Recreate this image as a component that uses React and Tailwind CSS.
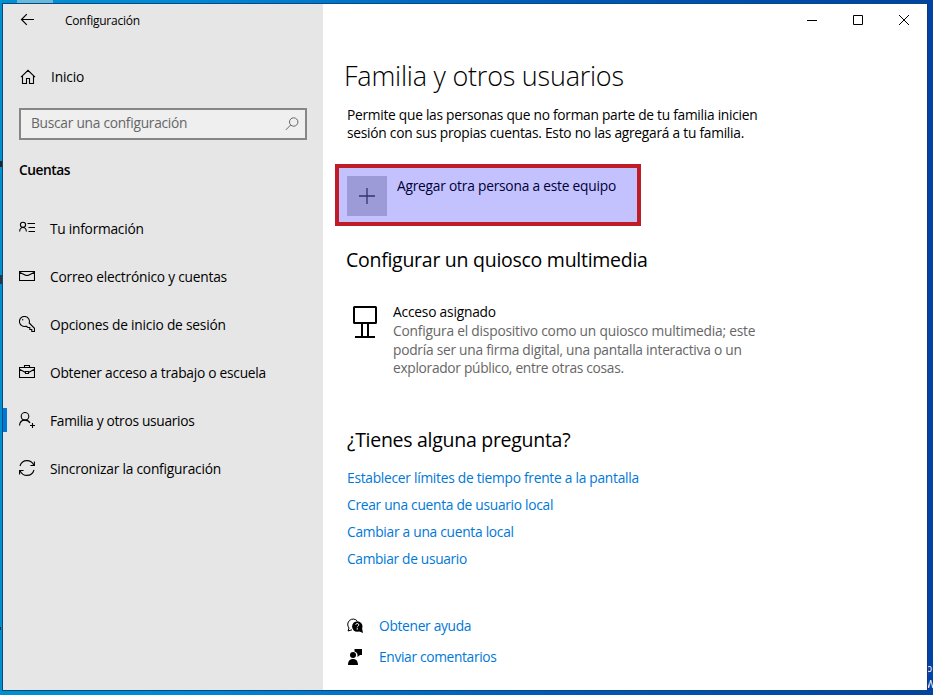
import React from "react";

function Icon({ children, className = "w-4 h-4", box = "0 0 16 16", sw = 1.1 }) {
  return (
    <svg viewBox={box} className={`${className} shrink-0`} fill="none" stroke="#000" strokeWidth={sw}>
      {children}
    </svg>
  );
}

const navItems = [
  {
    label: "Tu información",
    tracking: "tracking-[-0.25px]",
    icon: (
      <>
        <circle cx="4" cy="4.8" r="2.6" />
        <path d="M.6 11.5C.8 9 2.2 7.5 4 7.5S7.2 9 7.4 11.5M8.500 3.5H16M9.500 7.5H16M9.500 11.5H16" />
      </>
    ),
  },
  {
    label: "Correo electrónico y cuentas",
    tracking: "tracking-[-0.22px]",
    icon: <path d="M.5 3.5h15v9H.5zM.5 4.2 6 7q2 1 4 0l5.5-2.8" />,
  },
  {
    label: "Opciones de inicio de sesión",
    tracking: "tracking-[-0.2px]",
    icon: (
      <>
        <path d="M7 10.2A5 5 0 1 1 10.2 7l5.3 5.3v3.2h-2.7v-2h-2v-2H9z" />
        <circle cx="3.7" cy="3.7" r=".7" fill="#000" stroke="none" />
      </>
    ),
  },
  {
    label: "Obtener acceso a trabajo o escuela",
    tracking: "tracking-[-0.26px]",
    icon: <path d="M.5 3.5h15v10H.5zM5.5 3.5v-2h5v2M.5 5.2 6.5 8.5M9.5 8.5l6-3.3M6.5 7.5h3v2h-3z" />,
  },
  {
    label: "Familia y otros usuarios",
    tracking: "tracking-[-0.3px]",
    active: true,
    icon: (
      <>
        <circle cx="6" cy="4.3" r="3.8" />
        <path d="M.5 13.5C.8 10 3 8.1 6 8.1c2.2 0 4 1 5 3M13.5 11v5M11 13.5h5" />
      </>
    ),
  },
  {
    label: "Sincronizar la configuración",
    tracking: "tracking-[-0.22px]",
    icon: <path d="M1 6C2 2.7 4.8.6 8 .6c3 0 5.5 1.7 6.8 4.5M15.4 1.5v4h-4M15 10c-1 3.3-3.8 5.4-7 5.4-3 0-5.5-1.7-6.8-4.5M.6 14.5v-4h4" />,
  },
];

const links = [
  ["Establecer límites de tiempo frente a la pantalla", "tracking-[-0.26px]"],
  ["Crear una cuenta de usuario local", "tracking-[-0.28px]"],
  ["Cambiar a una cuenta local", "tracking-[-0.27px]"],
  ["Cambiar de usuario", "tracking-[-0.33px]"],
];

function Sidebar() {
  return (
    <aside className="w-80 h-full shrink-0 bg-[#e6e6e6] flex flex-col">
      <div className="h-8 flex items-center pl-[17px]">
        <Icon sw={1.2} className="w-4 h-4">
          <path d="M14 7.5H1.500M6.800 2.200 1.500 7.500l5.300 5.300" />
        </Icon>
        <span className="ml-[29px] pt-0.5 text-[12px] leading-4 tracking-[-0.25px]">Configuración</span>
      </div>
      <div className="mt-[25px] h-8 flex items-center pl-[17px]">
        <Icon>
          <path d="M1 8.200 8 1.300l7 6.900M2.500 7v7.500h4v-5h3v5h4V7" />
        </Icon>
        <span className="ml-[15px] tracking-[-0.15px]">Inicio</span>
      </div>
      <div className="mt-[15px] ml-4 w-72 h-8 shrink-0 border-2 border-[#868686] bg-[#efefef] flex items-center justify-between pl-[10px] pr-[6px] text-[#666]">
        <span className="pb-px tracking-[-0.27px]">Buscar una configuración</span>
        <svg viewBox="0 0 14 14" className="w-[14px] h-[14px]" fill="none" stroke="#666" strokeWidth="1">
          <circle cx="8.700" cy="5" r="4.200" />
          <path d="M5.700 8 .8 12.900" />
        </svg>
      </div>
      <div className="mt-[18px] ml-4 h-6 flex items-center font-semibold tracking-[-0.45px]">Cuentas</div>
      <nav className="mt-[23px] flex flex-col">
        {navItems.map((item) => (
          <a key={item.label} className="h-12 flex items-center">
            <span className={`w-1 h-6 shrink-0 -mt-0.5 ${item.active ? "bg-[#0078d7]" : ""}`} />
            <span className="ml-3 -mt-[3px] flex"><Icon>{item.icon}</Icon></span>
            <span className={`ml-[15px] whitespace-nowrap ${item.tracking}`}>{item.label}</span>
          </a>
        ))}
      </nav>
    </aside>
  );
}

function Main() {
  return (
    <main className="flex-1 h-full bg-white flex flex-col pl-6 whitespace-nowrap">
      <div className="h-8 flex items-center justify-end gap-9 pr-[18px]">
        <svg viewBox="0 0 10 10" className="w-[10px] h-[10px]" stroke="#000"><path d="M0 5.500h10" /></svg>
        <svg viewBox="0 0 10 10" className="w-[10px] h-[10px]" stroke="#000" fill="none"><path d="M.5.5h9v9h-9z" /></svg>
        <svg viewBox="0 0 10 10" className="w-[10px] h-[10px]" stroke="#000"><path d="M0 0l10 10M10 0 0 10" /></svg>
      </div>
      <h1 className="mt-5 h-10 -ml-[3px] text-[27px] leading-10 font-light tracking-[-0.23px]">Familia y otros usuarios</h1>
      <p className="mt-[10px] leading-[18px]">
        <span className="block tracking-[-0.27px]">Permite que las personas que no forman parte de tu familia inicien</span>
        <span className="block tracking-[-0.25px]">sesión con sus propias cuentas. Esto no las agregará a tu familia.</span>
      </p>
      <button className="mt-[22px] -ml-3 w-[306px] h-[62px] shrink-0 border-4 border-[#c01c28] bg-[#c3c2ff] flex items-start pt-2 pl-2 text-left text-[#000033]">
        <span className="w-10 h-10 bg-[#9c9bd8] flex items-center justify-center">
          <svg viewBox="0 0 16 16" className="w-4 h-4" stroke="#33336c" strokeWidth="1.300"><path d="M0 8h16M8 0v16" /></svg>
        </span>
        <span className="ml-[10px] leading-5 tracking-[-0.22px]">Agregar otra persona a este equipo</span>
      </button>
      <h2 className="mt-5 h-7 -ml-px text-[19.5px] leading-7 tracking-[-0.27px]">Configurar un quiosco multimedia</h2>
      <div className="mt-[29px] flex">
        <svg viewBox="0 0 24 32" className="w-6 h-8 ml-[6px] mt-[3px] shrink-0" fill="none" stroke="#000" strokeWidth="2">
          <rect x="1" y="1" width="22" height="16" rx=".5" />
          <path d="M9 17v14M15 17v14M2 31h20" />
        </svg>
        <div className="ml-4">
          <div className="h-[19px] leading-[18px] tracking-[-0.2px]">Acceso asignado</div>
          <p className="text-[#666] leading-[18.5px]">
            <span className="block tracking-[-0.2px]">Configura el dispositivo como un quiosco multimedia; este</span>
            <span className="block tracking-[-0.25px]">podría ser una firma digital, una pantalla interactiva o un</span>
            <span className="block tracking-[-0.3px]">explorador público, entre otras cosas.</span>
          </p>
        </div>
      </div>
      <h2 className="mt-[48px] h-7 text-[19.5px] leading-7 tracking-[-0.28px]">¿Tienes alguna pregunta?</h2>
      <div className="mt-[10px] flex flex-col text-[#0078d7]">
        {links.map(([label, tracking]) => (
          <a key={label} className={`h-[27px] leading-[27px] ${tracking}`}>{label}</a>
        ))}
      </div>
      <div className="mt-[39px] flex flex-col text-[#0078d7]">
        <a className="h-[31px] flex items-center">
          <svg viewBox="0 0 16 16" className="w-4 h-4 shrink-0">
            <path d="M5 11.800 1 13l1-3A5 5 0 1 1 10.300 3" fill="none" stroke="#000" />
            <circle cx="10.300" cy="8.500" r="5.200" fill="#000" />
            <path d="M12 13.300 16 15l-1-5z" fill="#000" />
            <path d="M8.700 6.900c.2-1.900 3.200-1.700 3.100 0 0 1.100-1.500 1.200-1.500 2.400" fill="none" stroke="#fff" />
            <path d="M9.700 10.200h1.200v1.200H9.700z" fill="#fff" />
          </svg>
          <span className="ml-4 tracking-[-0.3px]">Obtener ayuda</span>
        </a>
        <a className="h-[31px] flex items-center">
          <svg viewBox="0 0 16 16" className="w-4 h-4 shrink-0">
            <circle cx="6" cy="6" r="3" />
            <path d="M1 16c0-4 1.800-6 5-6s5 2 5 6zM7.500 0H15v6h-2l-2.500 2V5.500C10 4 9 3 7.500 2.600z" />
          </svg>
          <span className="ml-4 tracking-[-0.33px]">Enviar comentarios</span>
        </a>
      </div>
    </main>
  );
}

export default function App() {
  return (
    <div className="relative w-[933px] h-[695px] overflow-hidden pt-[3px] pl-[2px] bg-[linear-gradient(90deg,#0090d2_0%,#0088d8_20%,#0058b8_60%,#0043a4_100%)] text-black text-[13.75px] font-['Open_Sans','Noto_Sans',sans-serif]">
      <div className="absolute left-[17px] top-0 w-9 h-[3px] bg-[#69b9dc]" />
      <div className="absolute left-0 top-[161px] w-[2px] h-[6px] bg-[#20242c]" />
      <div className="absolute left-0 top-[275px] w-[2px] h-[9px] bg-[#25384b]" />
      <div className="absolute left-0 top-[627px] w-px h-[3px] bg-[#12232e]" />
      <div className="absolute left-[926px] top-[660px] text-[10px] leading-[16px] text-white">p<br />W</div>
      <div className="relative w-[926px] h-[688px] border border-[#0b4a72] border-r-[#12337c] flex">
        <Sidebar />
        <Main />
      </div>
    </div>
  );
}
